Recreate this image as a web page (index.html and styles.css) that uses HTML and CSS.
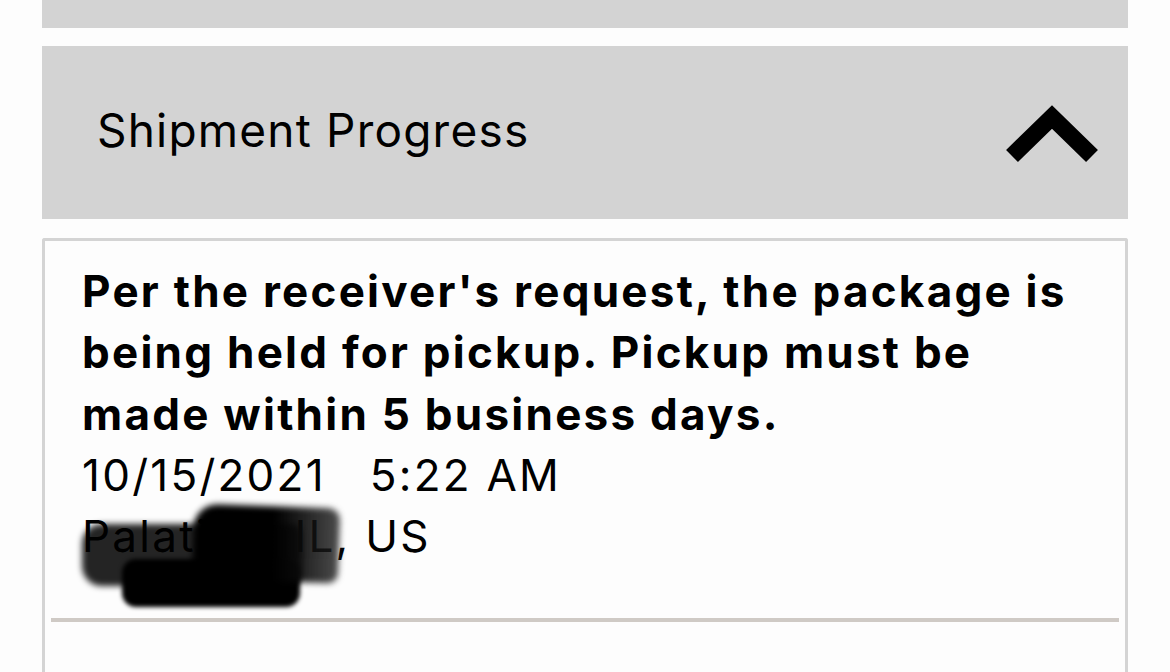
FILE: index.html
```html
<!DOCTYPE html>
<html lang="en">
<head>
<meta charset="utf-8">
<title>Shipment Progress</title>
<link rel="stylesheet" href="styles.css">
</head>
<body>
<div class="page">
  <div class="prev-bar"></div>
  <div class="section-header">
    <span class="section-title">Shipment Progress</span>
    <svg class="chevron" width="100" height="70" viewBox="0 0 100 70" aria-hidden="true">
      <polyline points="10,56 50,17 90,56" fill="none" stroke="#000" stroke-width="17" stroke-linejoin="miter" stroke-linecap="butt"/>
    </svg>
  </div>
  <div class="card">
    <div class="event">
      <p class="event-desc">Per the receiver's request, the package is being held for pickup. Pickup must be made within 5 business days.</p>
      <p class="event-time">10/15/2021&nbsp;&nbsp;&nbsp;5:22 AM</p>
      <p class="event-place">Palatine, IL, US</p>
      <div class="redact">
        <div class="smudge s1"></div>
        <div class="smudge s2"></div>
        <div class="smudge s3"></div>
      </div>
    </div>
    <div class="divider"></div>
  </div>
</div>
</body>
</html>
```

FILE: styles.css
```css
html, body {
  margin: 0;
  padding: 0;
  background: #fdfdfd;
}
body {
  font-family: Inter, "Noto Sans", "Liberation Sans", sans-serif;
  color: #000;
  overflow: hidden;
  height: 672px;
}
.page {
  padding: 0 42px;
  display: flex;
  flex-direction: column;
}
.prev-bar {
  height: 28px;
  background: #d3d3d3;
}
.section-header {
  margin-top: 18px;
  height: 173px;
  background: #d3d3d3;
  display: flex;
  align-items: center;
  justify-content: space-between;
  padding: 0 26px 0 55px;
}
.section-title {
  font-size: 46px;
  font-weight: 400;
  letter-spacing: 1.2px;
  margin-top: -6px;
}
.chevron {
  display: block;
  margin-top: 4px;
}
.card {
  margin-top: 19px;
  border: 3px solid #d4d4d4;
  border-bottom: none;
  border-radius: 3px 3px 0 0;
  height: 460px;
  padding: 0 6px;
}
.event {
  position: relative;
  padding: 20px 40px 0 31px;
  height: 357px;
}
.event p {
  margin: 0;
  font-size: 44px;
  line-height: 61.3px;
  letter-spacing: 2.25px;
}
.event-desc {
  font-weight: 700;
}
.event-time, .event-place {
  font-weight: 400;
}
.event-time {
  letter-spacing: 2.4px;
}
.divider {
  height: 4px;
  background: #cfcac5;
}
.redact {
  position: absolute;
  left: 0;
  top: 0;
  width: 0;
  height: 0;
}
.smudge {
  position: absolute;
}
.s1 {
  left: 31px;
  top: 283px;
  width: 220px;
  height: 62px;
  border-radius: 20px 10px 14px 20px;
  background: rgba(0, 0, 0, 0.86);
  filter: blur(3px);
}
.s2 {
  left: 71px;
  top: 318px;
  width: 178px;
  height: 48px;
  border-radius: 14px;
  background: #000;
  filter: blur(2px);
}
.s3 {
  left: 142px;
  top: 265px;
  width: 146px;
  height: 75px;
  border-radius: 24px 12px 10px 12px;
  background: linear-gradient(90deg, #000 0%, #000 55%, rgba(30, 30, 30, 0.8) 100%);
  filter: blur(3px);
  transform: rotate(2deg);
}
```
